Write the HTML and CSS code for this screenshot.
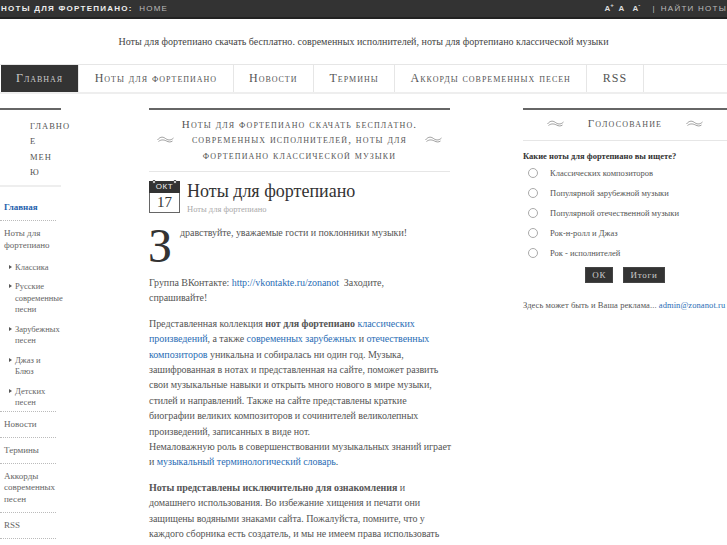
FILE: index.html
```html
<!DOCTYPE html>
<html lang="ru">
<head>
    <meta charset="UTF-8">
    <title>Ноты для фортепиано</title>
    <link rel="stylesheet" href="styles.css">
</head>
<body>
    <div class="topbar">
        <div class="crumbs"><b>Ноты для фортепиано:</b> <span class="home">Home</span></div>
        <div class="tools">
            <span class="sizer">A<sup>+</sup></span>
            <span class="sizer">A</span>
            <span class="sizer">A<sup>-</sup></span>
            <span class="sep">|</span>
            <span class="search">Найти ноты</span>
        </div>
    </div>
    <p class="tagline">Ноты для фортепиано скачать бесплатно. современных исполнителей, ноты для фортепиано классической музыки</p>
    <div class="nav">
        <a class="active">Главная</a>
        <a>Ноты для фортепиано</a>
        <a>Новости</a>
        <a>Термины</a>
        <a>Аккорды современных песен</a>
        <a>RSS</a>
    </div>
    <div class="columns">
        <div class="left">
            <h3 class="menu-title">Главно<br>е<br>мен<br>ю</h3>
            <ul class="menu">
                <li><a class="current">Главная</a></li>
                <li>
                    <a>Ноты для фортепиано</a>
                    <ul class="submenu">
                        <li>Классика</li>
                        <li>Русские современные песни</li>
                        <li>Зарубежных песен</li>
                        <li>Джаз и<br>Блюз</li>
                        <li>Детских песен</li>
                    </ul>
                </li>
                <li><a>Новости</a></li>
                <li><a>Термины</a></li>
                <li><a>Аккорды современных песен</a></li>
                <li><a>RSS</a></li>
            </ul>
        </div>
        <div class="main">
            <div class="block-title">
                <svg class="orn" viewBox="0 0 16 7"><path d="M0 4C3 0 6 1 8 2.500S13 5 16 2M1 5.500C4 3 7 4 9 5S13 6.500 15 5" /></svg>
                <h2>Ноты для фортепиано скачать бесплатно. современных исполнителей, ноты для фортепиано классической музыки</h2>
                <svg class="orn" viewBox="0 0 16 7"><path d="M0 4C3 0 6 1 8 2.500S13 5 16 2M1 5.500C4 3 7 4 9 5S13 6.500 15 5" /></svg>
            </div>
            <div class="post-head">
                <div class="date">
                    <div class="month">окт</div>
                    <div class="day">17</div>
                </div>
                <div>
                    <h1>Ноты для фортепиано</h1>
                    <div class="cat">Ноты для фортепиано</div>
                </div>
            </div>
            <div class="post">
                <p class="first"><span class="dropcap">З</span>дравствуйте, уважаемые гости и поклонники музыки!</p>
                <p>Группа ВКонтакте: <a>http://vkontakte.ru/zonanot</a>&nbsp; Заходите,<br>
                спрашивайте!</p>
                <p>Представленная коллекция <b>нот для фортепиано</b> <a>классических</a><br>
                <a>произведений</a>, а также <a>современных зарубежных</a> и <a>отечественных</a><br>
                <a>композиторов</a> уникальна и собиралась ни один год. Музыка,<br>
                зашифрованная в нотах и представленная на сайте, поможет развить<br>
                свои музыкальные навыки и открыть много нового в мире музыки,<br>
                стилей и направлений. Также на сайте представлены краткие<br>
                биографии великих композиторов и сочинителей великолепных<br>
                произведений, записанных в виде нот.<br>
                Немаловажную роль в совершенствовании музыкальных знаний играет<br>
                и <a>музыкальный терминологический словарь</a>.</p>
                <p><b>Ноты представлены исключительно для ознакомления</b> и<br>
                домашнего использования. Во избежание хищения и печати они<br>
                защищены водяными знаками сайта. Пожалуйста, помните, что у<br>
                каждого сборника есть создатель, и мы не имеем права использовать</p>
            </div>
        </div>
        <div class="right">
            <div class="block-title poll-title">
                <svg class="orn" viewBox="0 0 16 7"><path d="M0 4C3 0 6 1 8 2.500S13 5 16 2M1 5.500C4 3 7 4 9 5S13 6.500 15 5" /></svg>
                <h2>Голосование</h2>
                <svg class="orn" viewBox="0 0 16 7"><path d="M0 4C3 0 6 1 8 2.500S13 5 16 2M1 5.500C4 3 7 4 9 5S13 6.500 15 5" /></svg>
            </div>
            <div class="question">Какие ноты для фортепиано вы ищете?</div>
            <div class="answers">
                <div class="answer"><span class="radio"></span>Классических композиторов</div>
                <div class="answer"><span class="radio"></span>Популярной зарубежной музыки</div>
                <div class="answer"><span class="radio"></span>Популярной отечественной музыки</div>
                <div class="answer"><span class="radio"></span>Рок-н-ролл и Джаз</div>
                <div class="answer"><span class="radio"></span>Рок - исполнителей</div>
            </div>
            <div class="buttons">
                <button type="button">ОК</button>
                <button type="button">Итоги</button>
            </div>
            <p class="ad">Здесь может быть и Ваша реклама... <a>admin@zonanot.ru</a></p>
        </div>
    </div>
</body>
</html>
```

FILE: styles.css
```css
html, body {
    margin: 0;
    padding: 0;
    height: 100%;
    overflow: hidden;
}
body {
    font-family: "Liberation Serif", serif;
    font-size: 10px;
    color: #555;
    background: #fff;
}
a { color: #2a6db5; }

.topbar {
    display: flex;
    justify-content: space-between;
    height: 17px;
    line-height: 17px;
    background: #333;
    border-bottom: 2px solid #222;
    font-family: "Liberation Sans", sans-serif;
    font-size: 8px;
    letter-spacing: 1.250px;
    text-transform: uppercase;
    color: #bbb;
    white-space: nowrap;
}
.crumbs { padding-left: 1px; }
.crumbs b { color: #eee; margin-right: 3px; }
.tools { display: flex; gap: 3px; }
.sizer { font-weight: bold; color: #ddd; letter-spacing: 0; width: 11px; }
.sizer sup { font-size: 6px; line-height: 0; }
.sep { margin: 0 2px 0 6px; }

.tagline {
    margin: 0;
    height: 45px;
    line-height: 45px;
    text-align: center;
    letter-spacing: 0.020px;
    color: #444;
}

.nav {
    display: flex;
    height: 27px;
    border-top: 1px solid #e6e6e6;
    border-bottom: 2px solid #eee;
}
.nav a {
    padding: 0 15.500px;
    line-height: 27px;
    color: #555;
    font-size: 12px;
    font-variant: small-caps;
    letter-spacing: 0.970px;
    border-right: 1px solid #e6e6e6;
}
.nav a.active {
    margin-left: 1px;
    padding: 0 15px;
    background: #333;
    color: #ccc;
}

.columns {
    display: flex;
    margin-top: 14px;
}
.columns > div { flex: none; border-top: 2px solid #666; }
.left { width: 61px; margin-right: 88px; }
.main { width: 301px; margin-right: 73px; }
.right { width: 204px; }

.menu-title {
    margin: 0;
    padding: 9px 0 5px 30px;
    border-bottom: 2px solid #eee;
    font-size: 8.500px;
    font-weight: normal;
    line-height: 15.300px;
    letter-spacing: 1px;
    text-transform: uppercase;
    white-space: nowrap;
    color: #555;
}
.menu, .submenu {
    list-style: none;
    margin: 0;
    padding: 0;
}
.menu { width: 56px; margin-top: 8px; }
.menu > li {
    padding: 7px 0 0 4px;
    border-bottom: 1px dotted #bbb;
}
.menu > li > a {
    display: block;
    padding-bottom: 6.500px;
    color: #666;
    font-size: 9px;
    line-height: 11.500px;
}
.menu > li > a.current { color: #1f62ad; font-weight: bold; }
.submenu { width: 58px; margin-bottom: -2px; }
.submenu li {
    position: relative;
    padding: 4px 0 4px 11px;
    font-size: 8.500px;
    line-height: 11.500px;
    color: #666;
}
.submenu li::before {
    content: "";
    position: absolute;
    left: 5px;
    top: 7px;
    border-left: 3px solid #555;
    border-top: 2px solid transparent;
    border-bottom: 2px solid transparent;
}

.block-title {
    display: flex;
    align-items: center;
    justify-content: space-between;
    padding: 7px 8px 8px;
    border-bottom: 1px solid #e6e6e6;
}
.block-title h2 {
    margin: 0;
    width: 246px;
    font-size: 11px;
    font-weight: normal;
    font-variant: small-caps;
    line-height: 15.300px;
    letter-spacing: 1.100px;
    text-align: center;
    color: #555;
}
.orn {
    width: 17px;
    height: 7px;
    flex: none;
    fill: none;
    stroke: #777;
    stroke-width: 0.7;
}

.post-head {
    display: flex;
    gap: 7px;
    margin-top: 9px;
}
.date { width: 31px; flex: none; }
.month {
    position: relative;
    height: 12px;
    line-height: 12px;
    background: #333;
    color: #eee;
    font-family: "Liberation Sans", sans-serif;
    font-size: 8px;
    letter-spacing: 0.500px;
    text-align: center;
    text-transform: uppercase;
}
.month::before, .month::after {
    content: "";
    position: absolute;
    top: -1px;
    width: 2px;
    height: 2px;
    border: 1px solid #333;
    border-radius: 50%;
    background: #fff;
}
.month::before { left: 3px; }
.month::after { right: 3px; }
.day {
    height: 19px;
    line-height: 19px;
    border: 1px solid #666;
    border-top: 0;
    font-size: 15px;
    text-align: center;
    color: #333;
}
h1 {
    margin: 0;
    font-size: 18px;
    font-weight: normal;
    line-height: 21px;
    color: #333;
}
.cat { font-size: 8.500px; color: #aaa; line-height: 12px; margin-top: 1px; }

.post { margin-top: 10px; letter-spacing: -0.050px; white-space: nowrap; }
.post p { margin: 0 0 10px; line-height: 15.400px; }
.post .first { min-height: 50px; margin-bottom: 0; }
.dropcap {
    float: left;
    margin: 0 0 0 -1px;
    font-size: 48px;
    line-height: 42px;
    width: 32px;
    color: #333;
}

.poll-title { padding: 6px 24px 9px; }
.poll-title h2 { width: auto; font-size: 11px; letter-spacing: 1.200px; }
.question { margin-top: 10px; font-size: 8.500px; font-weight: bold; color: #333; }
.answers { margin-top: 2px; }
.answer {
    display: flex;
    align-items: center;
    height: 20px;
    padding-left: 5px;
    font-size: 8.500px;
}
.radio {
    width: 8px;
    height: 8px;
    margin-right: 12px;
    border: 1px solid #aaa;
    border-radius: 50%;
}
.buttons {
    display: flex;
    justify-content: center;
    gap: 10px;
    margin-top: 4px;
}
button {
    height: 16px;
    padding: 0 6px;
    border: 1px solid #444;
    background: #333;
    color: #ccc;
    font-family: "Liberation Serif", serif;
    font-size: 9px;
    letter-spacing: 0.800px;
}
.ad { margin: 17px 0 0; font-size: 8.500px; letter-spacing: 0.080px; white-space: nowrap; }
```
